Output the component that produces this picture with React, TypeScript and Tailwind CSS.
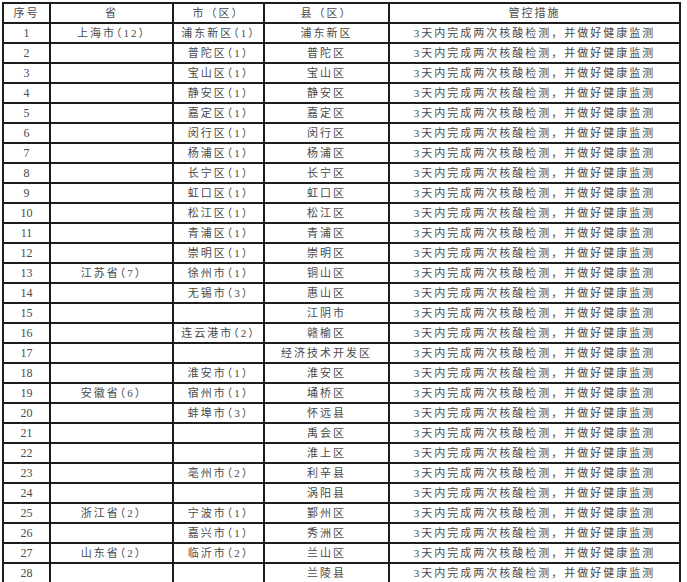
const rows: [string, string, string, string][] = [
  ["1", "上海市（12）", "浦东新区（1）", "浦东新区"],
  ["2", "", "普陀区（1）", "普陀区"],
  ["3", "", "宝山区（1）", "宝山区"],
  ["4", "", "静安区（1）", "静安区"],
  ["5", "", "嘉定区（1）", "嘉定区"],
  ["6", "", "闵行区（1）", "闵行区"],
  ["7", "", "杨浦区（1）", "杨浦区"],
  ["8", "", "长宁区（1）", "长宁区"],
  ["9", "", "虹口区（1）", "虹口区"],
  ["10", "", "松江区（1）", "松江区"],
  ["11", "", "青浦区（1）", "青浦区"],
  ["12", "", "崇明区（1）", "崇明区"],
  ["13", "江苏省（7）", "徐州市（1）", "铜山区"],
  ["14", "", "无锡市（3）", "惠山区"],
  ["15", "", "", "江阴市"],
  ["16", "", "连云港市（2）", "赣榆区"],
  ["17", "", "", "经济技术开发区"],
  ["18", "", "淮安市（1）", "淮安区"],
  ["19", "安徽省（6）", "宿州市（1）", "埇桥区"],
  ["20", "", "蚌埠市（3）", "怀远县"],
  ["21", "", "", "禹会区"],
  ["22", "", "", "淮上区"],
  ["23", "", "亳州市（2）", "利辛县"],
  ["24", "", "", "涡阳县"],
  ["25", "浙江省（2）", "宁波市（1）", "鄞州区"],
  ["26", "", "嘉兴市（1）", "秀洲区"],
  ["27", "山东省（2）", "临沂市（2）", "兰山区"],
  ["28", "", "", "兰陵县"],
];

const measure = "3天内完成两次核酸检测，并做好健康监测";

const cell =
  "flex items-center justify-center border-r-2 border-b-2 border-[#1c1c1c] whitespace-nowrap";

const App = () => {
  return (
    <div className="min-h-screen bg-white pt-[2px] pl-[2px] overflow-hidden">
      <div
        className="w-fit border-l-2 border-t-2 border-[#1c1c1c] text-[11px] leading-none tracking-[2px] text-[#4a4a4a]"
        style={{ fontFamily: '"Liberation Serif", "Noto Sans CJK SC", serif' }}
      >
        <div className="flex h-[20px]">
          <div className={`${cell} w-[47px]`}>序号</div>
          <div className={`${cell} w-[123px]`}>省</div>
          <div className={`${cell} w-[91px]`}>市（区）</div>
          <div className={`${cell} w-[125px]`}>县（区）</div>
          <div className={`${cell} w-[291px]`}>管控措施</div>
        </div>
        {rows.map(([no, province, city, county]) => (
          <div key={no} className="flex h-[20px]">
            <div className={`${cell} w-[47px] tracking-normal text-[12px]`}>{no}</div>
            <div className={`${cell} w-[123px] [font-feature-settings:'halt']`}>{province}</div>
            <div className={`${cell} w-[91px] [font-feature-settings:'halt']`}>{city}</div>
            <div className={`${cell} w-[125px]`}>{county}</div>
            <div className={`${cell} w-[291px]`}>{measure}</div>
          </div>
        ))}
      </div>
    </div>
  );
};

export default App;
